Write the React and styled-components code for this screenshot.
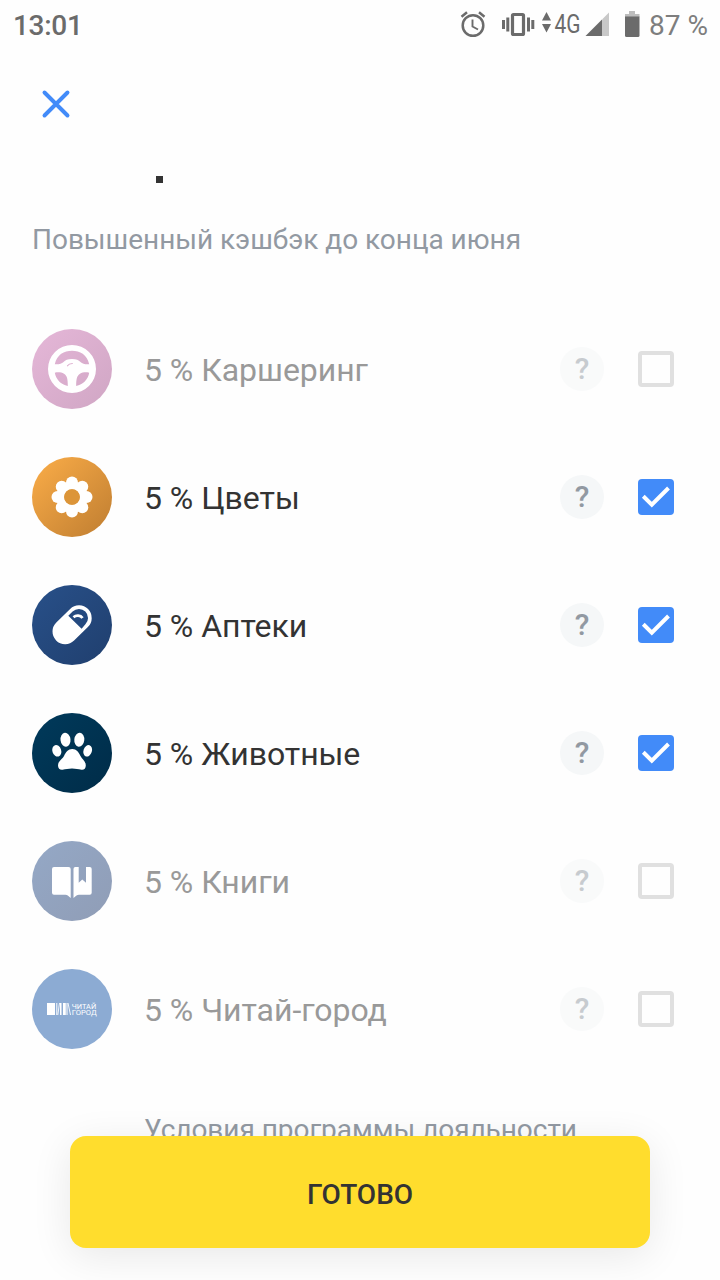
import React, { useState } from 'react';
import styled, { createGlobalStyle } from 'styled-components';

const GlobalStyle = createGlobalStyle`
  * {
    box-sizing: border-box;
  }

  body {
    margin: 0;
    background: #fefefe;
    font-family: Roboto, "Noto Sans", sans-serif;
  }
`;

const Screen = styled.div`
  position: relative;
  display: flex;
  flex-direction: column;
  width: 720px;
  height: 1280px;
  overflow: hidden;
  background: #fefefe;
`;

const StatusBar = styled.div`
  display: flex;
  align-items: center;
  justify-content: space-between;
  height: 48px;
  padding: 2px 12px 0 13px;
  color: #6b6b6b;
  flex: none;
`;

const Clock = styled.span`
  font-size: 28px;
  font-weight: 500;
  letter-spacing: -0.3px;
`;

const StatusIcons = styled.div`
  display: flex;
  align-items: center;
`;

const Battery = styled.span`
  margin-left: 3px;
  font-size: 28px;
  color: #7e7e7e;
`;

const TopBar = styled.div`
  display: flex;
  align-items: center;
  height: 112px;
  padding-left: 40px;
  flex: none;
`;

const CloseButton = styled.button`
  display: flex;
  padding: 0;
  border: 0;
  background: none;
`;

const Heading = styled.div`
  height: 56px;
  padding: 16px 0 0 156px;
  flex: none;
`;

const Dot = styled.div`
  width: 7px;
  height: 7px;
  background: #333;
`;

const Subtitle = styled.p`
  height: 89px;
  margin: 0;
  padding: 7px 0 0 32px;
  font-size: 28px;
  line-height: 33px;
  letter-spacing: -0.03px;
  color: #9299a2;
  flex: none;
`;

const List = styled.div`
  display: flex;
  flex-direction: column;
  flex: none;
`;

const Row = styled.div`
  display: flex;
  align-items: center;
  height: 128px;
  padding: 0 46px 0 32px;
`;

const Avatar = styled.div`
  width: 80px;
  height: 80px;
  margin-right: 32px;
  border-radius: 50%;
  background: ${({ $bg }) => $bg};
  flex: none;
`;

const Label = styled.span`
  flex: 1;
  padding-top: 2px;
  font-size: 32px;
  line-height: 38px;
  letter-spacing: -0.03px;
  color: ${({ $active }) => ($active ? '#333' : '#999')};
`;

const Help = styled.button`
  display: flex;
  align-items: center;
  justify-content: center;
  width: 44px;
  height: 44px;
  margin-right: 34px;
  padding: 0 0 2px;
  border: 0;
  border-radius: 50%;
  background: #f5f7f8;
  font: 500 30px Roboto, sans-serif;
  color: #9299a2;
  opacity: ${({ $active }) => ($active ? 1 : 0.5)};
`;

const Checkbox = styled.button`
  display: flex;
  width: 36px;
  height: 36px;
  padding: 0;
  border: ${({ $active }) => ($active ? '0' : '4px solid #e0e0e0')};
  border-radius: 4px;
  background: ${({ $active }) => ($active ? '#428bf9' : 'transparent')};
`;

const Terms = styled.p`
  margin: 40px 0 0 144px;
  font-size: 28px;
  line-height: 33px;
  letter-spacing: -0.04px;
  color: #9299a2;
`;

// floats over the end of the list
const DoneButton = styled.button`
  position: absolute;
  left: 70px;
  bottom: 32px;
  width: 580px;
  height: 112px;
  padding: 4px 0 0;
  border: 0;
  border-radius: 16px;
  background: #ffdd2d;
  box-shadow: 0 8px 40px rgba(0, 0, 0, 0.09);
  font: 500 28px Roboto, sans-serif;
  color: #333;
`;

const WheelIcon = () => (
  <svg width="80" height="80" viewBox="0 0 80 80" fill="#fff">
    <path
      fillRule="evenodd"
      d="M40 16a24 24 0 1 0 0 48a24 24 0 1 0 0-48z
        M22.800 35.200C25 25.500 32 21.800 40 21.800S55 25.500 57.200 35.200C54 35.600 50.500 35 48.500 33C46.500 31.200 44.500 30 40 30S33.500 31.200 31.500 33C29.500 35 26 35.600 22.800 35.200z
        M22.800 43.700C26 43 29.500 43.200 32 44.800C35 46.500 35.800 50 35.800 57C29 55.500 24 50.500 22.800 43.700z
        M57.200 43.700C54 43 50.500 43.200 48 44.800C45 46.500 44.200 50 44.200 57C51 55.500 56 50.500 57.200 43.700z"
    />
    <path d="M35.500 36.800C36.500 35.200 38 34.500 40.300 34.500" fill="none" stroke="#deb0d0" strokeWidth="1.200" strokeLinecap="round" />
  </svg>
);

const petals = [0, 45, 90, 135, 180, 225, 270, 315];

const FlowerIcon = () => (
  <svg width="80" height="80" viewBox="0 0 80 80" fill="#fff">
    {petals.map((angle) => (
      <circle key={angle} cx="40" cy="25.500" r="6" transform={`rotate(${angle} 40 40)`} />
    ))}
    <circle cx="40" cy="40" r="11.300" fill="none" stroke="#fff" strokeWidth="7" />
    <circle cx="40" cy="40" r="7.800" fill="#dc9539" />
  </svg>
);

const PillIcon = () => (
  <svg width="80" height="80" viewBox="0 0 80 80">
    <path d="M33.200 46.500L47 33" stroke="#fff" strokeWidth="25.400" strokeLinecap="round" />
    <path d="M36.300 30.800L40.600 26.600A9 9 0 0 1 53.400 39.300L49.600 43.700z" fill="#244a80" />
    <path d="M41.500 32.200C44 30 48.500 30 50.500 33" fill="none" stroke="#fff" strokeWidth="2.800" />
  </svg>
);

const PawIcon = () => (
  <svg width="80" height="80" viewBox="0 0 80 80" fill="#fff">
    <ellipse cx="24.800" cy="37.800" rx="4.400" ry="5.900" transform="rotate(-18 24.800 37.800)" />
    <ellipse cx="33.500" cy="26.800" rx="5" ry="7" transform="rotate(-6 33.500 26.800)" />
    <ellipse cx="47.300" cy="26.800" rx="5" ry="7" transform="rotate(6 47.300 26.800)" />
    <ellipse cx="55.700" cy="37.800" rx="4.200" ry="5.900" transform="rotate(18 55.700 37.800)" />
    <path d="M40.300 36C44.500 36 46.500 39 48.500 43C50 46 53.800 48 53.800 52.500C53.800 55.500 52 57 49.500 56.700C46 56.300 44 55.500 40 55.500S34 56.300 30.500 56.700C28 57 26 55.500 26 52.500C26 48 30.500 46 32 43C34 39 36 36 40.300 36z" />
  </svg>
);

const BookIcon = () => (
  <svg width="80" height="80" viewBox="0 0 80 80" fill="#fff">
    <path d="M22 26H36.500Q38.700 26 38.700 28V57L35.800 54.600Q34.800 53.700 33.500 53.700H22Q20 53.700 20 51.700V28Q20 26 22 26z" />
    <path d="M43.300 26H46.700V41.700L50.300 38.500L54 41.700V26H57.700Q59.700 26 59.700 28V51.700Q59.700 53.700 57.700 53.700H47Q45.500 53.700 44.500 54.600L41.500 57V28Q41.500 26 43.300 26z" />
  </svg>
);

const ShopIcon = () => (
  <svg width="80" height="80" viewBox="0 0 80 80" fill="#fff">
    <path d="M15 34h8v12h-8zM24.300 34h1v12h-1zM28 34h1.500v12h-1.500zM31 34h2.800v12h-2.800zM34.500 34h1v12h-1z" />
    <path d="M27.500 34L25.800 46M36 34L38.500 46" stroke="#fff" strokeWidth="0.900" />
    <text x="39.700" y="39.500" fontSize="7.500" fontFamily="Roboto" textLength="24.500" lengthAdjust="spacingAndGlyphs">ЧИТАЙ</text>
    <text x="39.700" y="45.700" fontSize="7.500" fontFamily="Roboto" textLength="25" lengthAdjust="spacingAndGlyphs">ГОРОД</text>
  </svg>
);

const CheckIcon = () => (
  <svg width="36" height="36" viewBox="0 0 36 36">
    <path d="M5.300 17.300L13.800 25.600L30.500 9" fill="none" stroke="#fff" strokeWidth="4" />
  </svg>
);

const SystemIcons = () => (
  <svg width="190" height="40" viewBox="456 5 190 40" fill="#6b6b6b">
    {/* alarm */}
    <g fill="none" stroke="#6b6b6b">
      <circle cx="473" cy="25.500" r="10.300" strokeWidth="2.500" />
      <path d="M472.500 19.500V26.500L478 29.500" strokeWidth="1.900" />
      <path d="M461.500 16.700L467 12.300M479 12.300L484.500 16.700" strokeWidth="2.500" />
    </g>
    {/* vibrate */}
    <rect x="512.500" y="14.500" width="11" height="20" rx="1" fill="none" stroke="#6b6b6b" strokeWidth="3.200" />
    <path d="M502 20h3v9h-3zM506.300 17.500h3v14h-3zM527 17.500h3v14h-3zM531.300 20h3v9h-3z" />
    {/* network */}
    <path d="M546.500 12L551 20.500H542zM542 24H551L546.500 32.500z" />
    <text x="554.500" y="33" fontSize="26" fontFamily="Roboto" textLength="26" lengthAdjust="spacingAndGlyphs">4G</text>
    <path d="M602 19.500V36H585.500z" />
    <path d="M602 19.500L609 12.500V36H602z" fill="#c8c8c8" />
    {/* battery */}
    <path d="M625 17V14h4v-3h6v3h4.500v3z" fill="#bdbdbd" />
    <path d="M625 16.500H639.500V35.500Q639.500 37 638 37H626.500Q625 37 625 35.500z" />
  </svg>
);

const categories = [
  { id: 'carsharing', name: 'Каршеринг', icon: WheelIcon, bg: 'linear-gradient(135deg, #e5b7d8, #d0a6c4)', selected: false },
  { id: 'flowers', name: 'Цветы', icon: FlowerIcon, bg: 'linear-gradient(135deg, #f2a645 15%, #c58233 90%)', selected: true },
  { id: 'pharmacy', name: 'Аптеки', icon: PillIcon, bg: 'linear-gradient(135deg, #285089, #203f6e)', selected: true },
  { id: 'pets', name: 'Животные', icon: PawIcon, bg: 'linear-gradient(135deg, #003a5b, #002c48)', selected: true },
  { id: 'books', name: 'Книги', icon: BookIcon, bg: 'linear-gradient(135deg, #94a8c6, #909db6)', selected: false },
  { id: 'chitai', name: 'Читай-город', icon: ShopIcon, bg: '#8cabd3', selected: false },
];

function App() {
  const [selected, setSelected] = useState(
    categories.filter((c) => c.selected).map((c) => c.id)
  );

  const toggle = (id) => {
    setSelected((prev) => (prev.includes(id) ? prev.filter((item) => item !== id) : [...prev, id]));
  };

  return (
    <Screen>
      <GlobalStyle />
      <StatusBar>
        <Clock>13:01</Clock>
        <StatusIcons>
          <SystemIcons />
          <Battery>87 %</Battery>
        </StatusIcons>
      </StatusBar>
      <TopBar>
        <CloseButton type="button" aria-label="Закрыть">
          <svg width="32" height="32" viewBox="0 0 32 32">
            <path d="M4.500 4.500L27.500 27.500M27.500 4.500L4.500 27.500" stroke="#428bf9" strokeWidth="3.900" strokeLinecap="round" />
          </svg>
        </CloseButton>
      </TopBar>
      <Heading>
        <Dot />
      </Heading>
      <Subtitle>Повышенный кэшбэк до конца июня</Subtitle>
      <List>
        {categories.map(({ id, name, icon: Icon, bg }) => {
          const active = selected.includes(id);
          return (
            <Row key={id}>
              <Avatar $bg={bg}>
                <Icon />
              </Avatar>
              <Label $active={active}>{`5 % ${name}`}</Label>
              <Help $active={active} type="button">?</Help>
              <Checkbox $active={active} type="button" aria-label={name} onClick={() => toggle(id)}>
                {active && <CheckIcon />}
              </Checkbox>
            </Row>
          );
        })}
      </List>
      <Terms>Условия программы лояльности</Terms>
      <DoneButton type="button">ГОТОВО</DoneButton>
    </Screen>
  );
}

export default App;
